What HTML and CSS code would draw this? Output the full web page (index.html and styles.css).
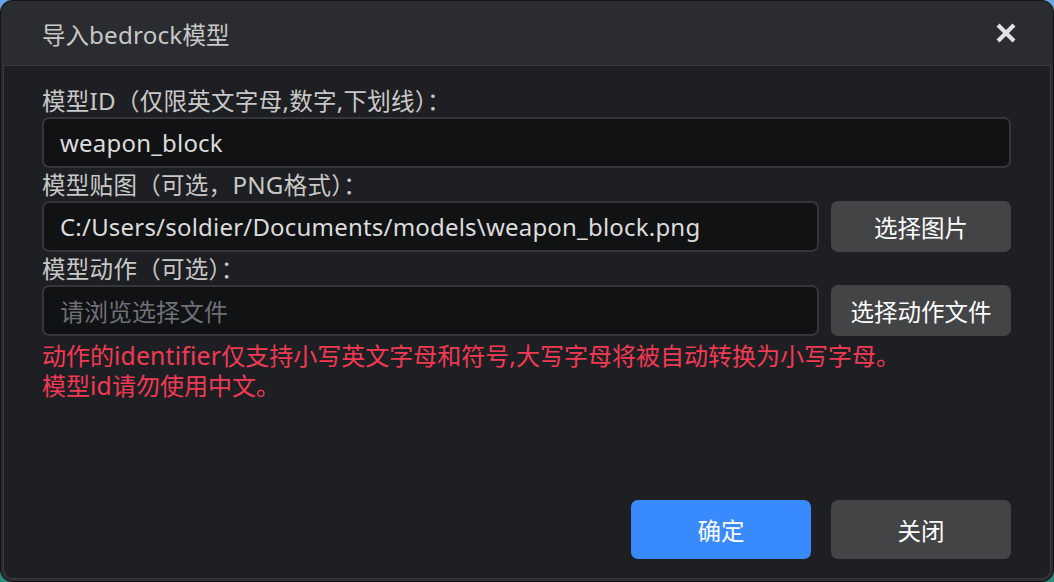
FILE: index.html
```html
<!DOCTYPE html>
<html lang="zh">
<head>
<meta charset="utf-8">
<title>导入bedrock模型</title>
<link rel="stylesheet" href="styles.css">
</head>
<body>
<div class="dialog">
  <div class="header">
    <span class="title">导入<span class="en">bedrock</span>模型</span>
    <svg class="close" width="20" height="20" viewBox="0 0 20 20"><path d="M3.5 3.5L16.5 16.5M16.5 3.5L3.5 16.5" stroke="#e2e2e2" stroke-width="4.2" stroke-linecap="square"/></svg>
  </div>
  <div class="body">
    <div class="label">模型<span class="en">ID</span>（仅限英文字母<span class="en">,</span>数字<span class="en">,</span>下划线）：</div>
    <div class="row"><div class="input">weapon_block</div></div>
    <div class="label">模型贴图（可选，<span class="en">PNG</span>格式）：</div>
    <div class="row"><div class="input">C:/Users/soldier/Documents/models\weapon_block.png</div><button class="btn gray">选择图片</button></div>
    <div class="label">模型动作（可选）：</div>
    <div class="row"><div class="input placeholder">请浏览选择文件</div><button class="btn gray">选择动作文件</button></div>
    <div class="warn">
      <div class="warn-line">动作的<span class="en">identifier</span>仅支持小写英文字母和符号<span class="en">,</span>大写字母将被自动转换为小写字母。</div>
      <div class="warn-line">模型<span class="en">id</span>请勿使用中文。</div>
    </div>
    <div class="footer">
      <button class="btn big blue">确定</button>
      <button class="btn big gray">关闭</button>
    </div>
  </div>
</div>
</body>
</html>
```

FILE: styles.css
```css
html, body {
  margin: 0;
  padding: 0;
  width: 1054px;
  height: 582px;
  overflow: hidden;
  background: linear-gradient(#6aa8e8, #2a8c78);
}
.dialog {
  box-sizing: border-box;
  width: 1054px;
  height: 582px;
  background: #2b2c2f;
  border: 1px solid #121315;
  border-radius: 12px;
  display: flex;
  flex-direction: column;
  font-family: "Noto Sans CJK SC", "Noto Sans", sans-serif;
  overflow: hidden;
}
.en {
  font-family: "Noto Sans", "Noto Sans CJK SC", sans-serif;
  font-size: 1.03em;
  letter-spacing: 0.2px;
}
.header {
  height: 64px;
  flex: none;
  display: flex;
  align-items: center;
  justify-content: space-between;
  padding: 0 37px 0 41px;
}
.title {
  font-size: 23.5px;
  line-height: 30px;
  color: #c8c8c8;
  position: relative;
  top: 1px;
}
.close { display: block; }
.body {
  flex: 1;
  margin: 0 2px 2px 2px;
  background: #1e1f22;
  border: 1px solid #393a3d;
  border-radius: 0 0 10px 10px;
  padding: 18px 39px 0 38px;
  display: flex;
  flex-direction: column;
}
.label {
  font-size: 23.5px;
  line-height: 33px;
  height: 33px;
  color: #c8c8c8;
  white-space: nowrap;
  letter-spacing: 0.3px;
}
.row {
  display: flex;
  gap: 12px;
}
.input {
  flex: 1;
  box-sizing: border-box;
  height: 51px;
  background: #111214;
  border: 2px solid #35363a;
  border-radius: 7px;
  padding: 0 16px;
  font-family: "Noto Sans", "Noto Sans CJK SC", sans-serif;
  font-size: 24px;
  letter-spacing: 0.2px;
  line-height: 47px;
  color: #dcdcdc;
  white-space: nowrap;
}
.placeholder {
  color: #6f7074;
  font-family: "Noto Sans CJK SC", sans-serif;
  font-size: 24px;
  letter-spacing: 0;
}
.btn {
  border: none;
  border-radius: 7px;
  font-family: "Noto Sans CJK SC", "Noto Sans", sans-serif;
  font-size: 23.5px;
  color: #ffffff;
  width: 180px;
  height: 51px;
  padding: 0;
}
.gray { background: #434446; }
.blue { background: #3a8aff; }
.big { height: 59px; }
.warn {
  margin-top: 4px;
  font-size: 24px;
  color: #f23a55;
  white-space: nowrap;
}
.warn-line {
  height: 30px;
  line-height: 30px;
}
.warn-line .en {
  display: inline-block;
  line-height: 30px;
  height: 30px;
}
.footer {
  margin-top: auto;
  margin-bottom: 19px;
  display: flex;
  justify-content: flex-end;
  gap: 20px;
}
```
